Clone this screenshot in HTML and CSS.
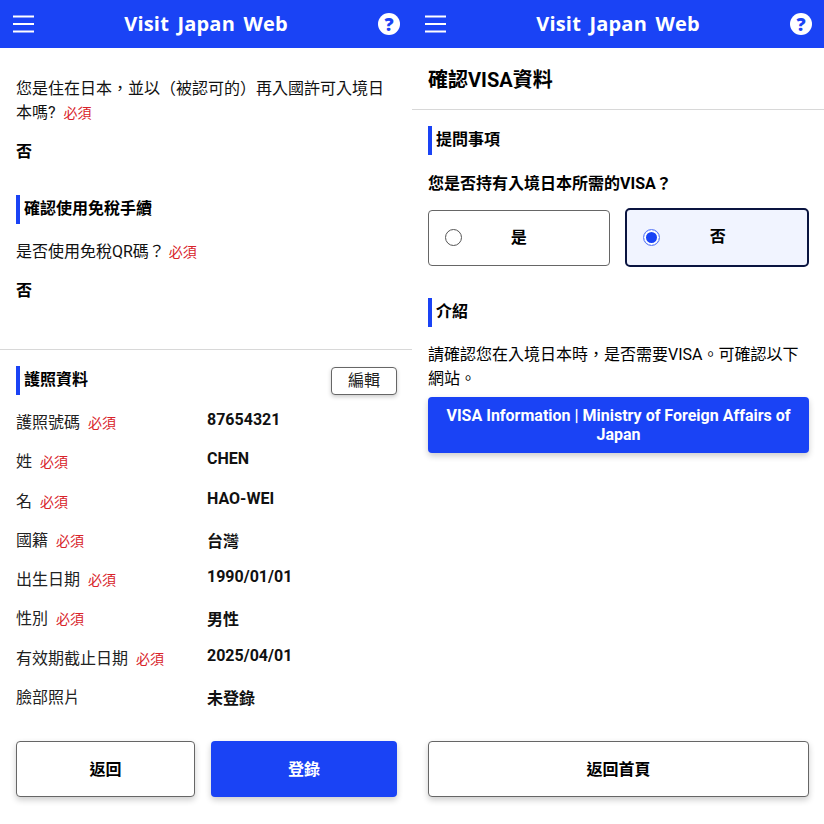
FILE: index.html
```html
<!DOCTYPE html>
<html lang="zh-Hant">
<head>
<meta charset="utf-8">
<title>Visit Japan Web</title>
<link rel="stylesheet" href="styles.css">
</head>
<body>
<div class="screens">
  <main class="phone">
    <header class="appbar">
      <svg class="menu" viewBox="0 0 21 18"><path d="M0 1.5H21M0 9H21M0 16.5H21"/></svg>
      <span class="brand">Visit Japan Web</span>
      <svg class="help" viewBox="0 0 22 22"><circle cx="11" cy="11" r="11" fill="#fff"/><text x="11" y="17.5" text-anchor="middle">?</text></svg>
    </header>
    <section class="block first">
      <p class="q">您是住在日本，並以（被認可的）再入國許可入境日本嗎? <span class="req">必須</span></p>
      <p class="a">否</p>
      <h2 class="h tax">確認使用免稅手續</h2>
      <p class="q q2">是否使用免稅QR碼？ <span class="req">必須</span></p>
      <p class="a">否</p>
    </section>
    <section class="block passport">
      <div class="hrow">
        <h2 class="h">護照資料</h2>
        <button class="edit">編輯</button>
      </div>
      <dl class="rows">
        <div class="row"><dt>護照號碼<span class="req">必須</span></dt><dd>87654321</dd></div>
        <div class="row"><dt>姓<span class="req">必須</span></dt><dd>CHEN</dd></div>
        <div class="row"><dt>名<span class="req">必須</span></dt><dd>HAO-WEI</dd></div>
        <div class="row"><dt>國籍<span class="req">必須</span></dt><dd class="cjk">台灣</dd></div>
        <div class="row"><dt>出生日期<span class="req">必須</span></dt><dd>1990/01/01</dd></div>
        <div class="row"><dt>性別<span class="req">必須</span></dt><dd class="cjk">男性</dd></div>
        <div class="row"><dt>有效期截止日期<span class="req">必須</span></dt><dd>2025/04/01</dd></div>
        <div class="row"><dt>臉部照片</dt><dd class="cjk">未登錄</dd></div>
      </dl>
    </section>
    <footer class="actions">
      <button class="btn back">返回</button>
      <button class="btn primary reg">登錄</button>
    </footer>
  </main>
  <main class="phone">
    <header class="appbar">
      <svg class="menu" viewBox="0 0 21 18"><path d="M0 1.5H21M0 9H21M0 16.5H21"/></svg>
      <span class="brand">Visit Japan Web</span>
      <svg class="help" viewBox="0 0 22 22"><circle cx="11" cy="11" r="11" fill="#fff"/><text x="11" y="17.5" text-anchor="middle">?</text></svg>
    </header>
    <h1 class="title">確認VISA資料</h1>
    <section class="block visa">
      <h2 class="h">提問事項</h2>
      <p class="ask">您是否持有入境日本所需的VISA？</p>
      <div class="choices">
        <div class="choice"><span class="radio"></span><span class="lbl">是</span></div>
        <div class="choice on"><span class="radio"></span><span class="lbl">否</span></div>
      </div>
      <h2 class="h intro">介紹</h2>
      <p class="para">請確認您在入境日本時，是否需要VISA。可確認以下網站。</p>
      <a class="btn primary link">VISA Information | Ministry of Foreign Affairs of Japan</a>
    </section>
    <footer class="actions">
      <button class="btn back wide">返回首頁</button>
    </footer>
  </main>
</div>
</body>
</html>
```
FILE: styles.css
```css
* { box-sizing: border-box; }
html, body { margin: 0; background: #fff; }
body { font-family: Roboto, "Noto Sans CJK TC", sans-serif; color: #000; font-size: 16px; }
.screens { display: flex; width: 824px; height: 824px; overflow: hidden; }
.phone { width: 412px; height: 824px; display: flex; flex-direction: column; }
p, h1, h2, dl, dd { margin: 0; }

.appbar { height: 48px; flex: none; background: #1a43f5; display: flex; align-items: center; justify-content: space-between; padding: 0 12px 0 13px; position: relative; }
.menu { width: 21px; height: 18px; fill: none; stroke: #fff; stroke-width: 2; }
.brand { color: #fff; font: 700 20px/24px "Open Sans", sans-serif; letter-spacing: .2px; word-spacing: 3px; position: absolute; left: 0; right: 0; text-align: center; }
.help { width: 22px; height: 22px; }
.help text { font: 800 18px "Open Sans", sans-serif; fill: #1a43f5; }

.block { padding: 0 16px; }
.first { padding-top: 29px; height: 302px; border-bottom: 1px solid #d8d8d8; flex: none; }
.q { line-height: 24px; padding-right: 8px; color: #111; }
.req { color: #d8232a; font-size: 14px; margin-left: 4px; }
.a { font-weight: 700; line-height: 24px; margin-top: 15px; }
.h { font-size: 16px; font-weight: 700; line-height: 28px; height: 29px; border-left: 4px solid #1a43f5; padding-left: 4px; }
.tax { margin-top: 31px; }
.q2 { margin-top: 16px; }
.q2 .req { margin-left: 0; }

.passport { padding: 16px 15px 0 16px; }
.hrow { display: flex; justify-content: space-between; align-items: center; }
.edit { width: 66px; height: 28px; background: #fff; border: 1px solid #666; border-radius: 4px; font: 16px/1 Roboto, "Noto Sans CJK TC", sans-serif; color: #222; box-shadow: 0 2px 4px rgba(0,0,0,.2); padding: 0; }
.rows { margin-top: 9px; }
.row { display: grid; grid-template-columns: 191px 1fr; height: 39.25px; align-items: start; }
dt { line-height: 38px; color: #222; }
dt .req { margin-left: 8px; }
dd { font-weight: 700; line-height: 20px; padding-top: 6px; color: #111; }
dd.cjk { line-height: 24px; padding-top: 8px; }

.actions { margin-top: auto; padding: 0 15px 27px 16px; display: flex; gap: 16px; }
.btn { height: 56px; border-radius: 4px; font: 700 16px/19px Roboto, "Noto Sans CJK TC", sans-serif; box-shadow: 0 3px 6px rgba(0,0,0,.2); padding: 0; }
.back { background: #fff; border: 1px solid #666; color: #000; }
.reg { width: 186px; }
.actions .back { width: 179px; }
.actions .back.wide { width: 381px; }
.primary { background: #1a43f5; border: 0; color: #fff; }

.title { font-size: 20px; font-weight: 700; line-height: 30px; height: 62px; padding: 17px 16px 0; border-bottom: 1px solid #d8d8d8; flex: none; }
.visa { padding: 16px 15px 0 16px; }
.ask { font-weight: 700; line-height: 24px; margin-top: 17px; }
.choices { display: flex; gap: 15px; margin-top: 14px; }
.choice { position: relative; width: 182px; height: 56px; border: 1px solid #666; border-radius: 4px; display: flex; align-items: center; justify-content: center; font-weight: 700; }
.choice.on { width: 185px; height: 59px; margin-top: -2px; border: 2px solid #0a1440; background: #f1f4ff; border-radius: 5px; }
.radio { position: absolute; left: 16px; top: 18px; width: 17px; height: 17px; border: 1px solid #555; border-radius: 50%; background: #fff; }
.on .radio { left: 16px; top: 19px; border-color: #5a78f7; box-shadow: inset 0 0 0 2px #fff, inset 0 0 0 8px #1a43f5; }
.lbl { line-height: 24px; margin-top: -1px; }
.on .lbl { margin-left: 2px; }
.intro { margin-top: 31px; }
.para { line-height: 24px; margin-top: 16px; }
.link { display: flex; align-items: center; justify-content: center; text-align: center; margin-top: 6px; padding: 0 16px; }
```
